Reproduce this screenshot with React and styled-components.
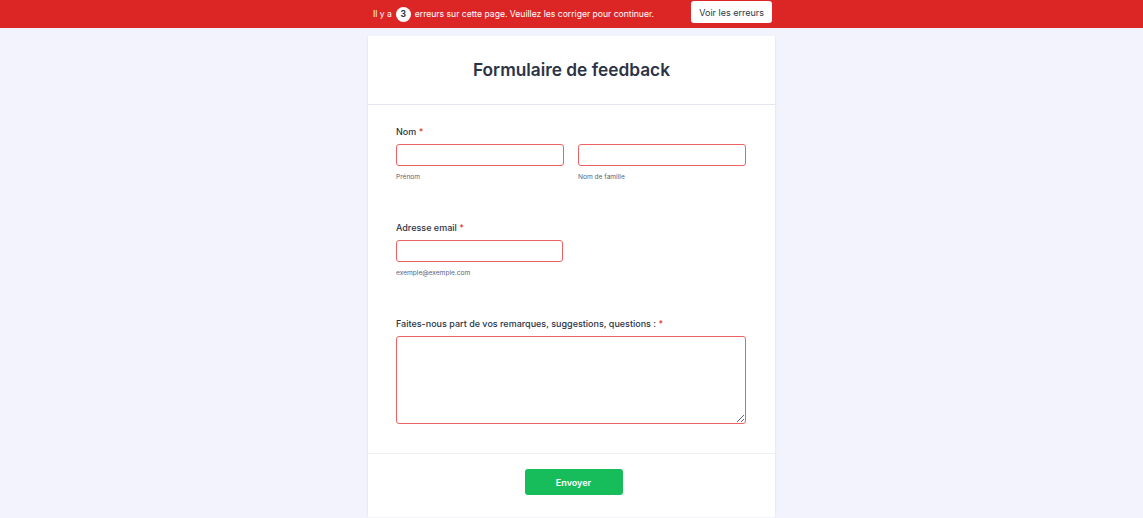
import styled, { createGlobalStyle } from "styled-components";

const GlobalStyle = createGlobalStyle`
  html, body {
    margin: 0;
    padding: 0;
    background: #f3f3fe;
    font-family: Inter, "Noto Sans", sans-serif;
    color: #2c3345;
  }
  * {
    box-sizing: border-box;
  }
`;

const Banner = styled.div`
  height: 28px;
  background: #dc2626;
  display: flex;
  align-items: center;
  justify-content: center;
  gap: 37px;
  padding-left: 2px;
`;

const BannerText = styled.p`
  margin: 0;
  color: #fff;
  font-size: 8.6px;
  display: flex;
  align-items: center;
  gap: 4px;
`;

const Badge = styled.span`
  display: inline-flex;
  align-items: center;
  justify-content: center;
  width: 15px;
  height: 15px;
  border-radius: 50%;
  background: #fff;
  color: #2c3345;
  font-size: 8.5px;
  font-weight: 700;
`;

const BannerButton = styled.button`
  width: 81px;
  height: 22px;
  margin-top: -4px;
  padding: 0;
  border: none;
  border-radius: 3px;
  background: #fff;
  color: #2c3345;
  font-family: inherit;
  font-size: 9px;
  cursor: pointer;
`;

const Card = styled.form`
  width: 407px;
  margin: 8px auto 0;
  background: #fff;
  box-shadow: 0 1px 2px rgba(40, 50, 80, 0.14);
`;

const Header = styled.header`
  height: 69px;
  display: flex;
  align-items: center;
  justify-content: center;
  padding-bottom: 1px;
  border-bottom: 1px solid #e3e5ef;
`;

const Title = styled.h1`
  margin: 0;
  font-size: 17.3px;
  font-weight: 600;
  color: #2c3345;
`;

const Body = styled.div`
  padding: 21px 29px 29px 28px;
  display: flex;
  flex-direction: column;
  gap: 41px;
  border-bottom: 1px solid #eef0f5;
`;

const Field = styled.div`
  display: flex;
  flex-direction: column;
`;

const Label = styled.label`
  font-size: 9px;
  font-weight: 500;
  line-height: 11px;
  margin-bottom: 7px;
  color: #2c3345;
`;

const Star = styled.span`
  color: #e53935;
`;

const Row = styled.div`
  display: grid;
  grid-template-columns: ${(p) => p.$cols || "1fr 1fr"};
  column-gap: 14px;
`;

const Cell = styled.div`
  display: flex;
  flex-direction: column;
`;

const Input = styled.input`
  height: 22px;
  width: 100%;
  border: 1px solid #ee6262;
  border-radius: 3px;
  outline: none;
  background: #fff;
`;

const TextArea = styled.textarea`
  height: 88px;
  width: 100%;
  border: 1px solid #ee6262;
  border-radius: 3px;
  outline: none;
  resize: vertical;
  font-family: inherit;
`;

const Sub = styled.span`
  margin-top: 7px;
  font-size: 6.6px;
  line-height: 8px;
  color: #57647e;
`;

const Footer = styled.div`
  display: flex;
  justify-content: center;
  padding: 15px 0 22px 4px;
`;

const Submit = styled.button`
  width: 98px;
  height: 26px;
  border: none;
  border-radius: 3px;
  background: #18bd5b;
  color: #fff;
  font-family: inherit;
  font-size: 9px;
  font-weight: 600;
  cursor: pointer;
`;

export default function App() {
  return (
    <>
      <GlobalStyle />
      <Banner>
        <BannerText>
          Il y a <Badge>3</Badge> erreurs sur cette page. Veuillez les corriger pour continuer.
        </BannerText>
        <BannerButton type="button">Voir les erreurs</BannerButton>
      </Banner>
      <Card onSubmit={(e) => e.preventDefault()}>
        <Header>
          <Title>Formulaire de feedback</Title>
        </Header>
        <Body>
          <Field>
            <Label>
              Nom <Star>*</Star>
            </Label>
            <Row>
              <Cell>
                <Input />
                <Sub>Prénom</Sub>
              </Cell>
              <Cell>
                <Input />
                <Sub>Nom de famille</Sub>
              </Cell>
            </Row>
          </Field>
          <Field>
            <Label>
              Adresse email <Star>*</Star>
            </Label>
            <Row $cols="167px 1fr">
              <Cell>
                <Input type="email" />
                <Sub>exemple@exemple.com</Sub>
              </Cell>
            </Row>
          </Field>
          <Field>
            <Label>
              Faites-nous part de vos remarques, suggestions, questions : <Star>*</Star>
            </Label>
            <TextArea />
          </Field>
        </Body>
        <Footer>
          <Submit type="submit">Envoyer</Submit>
        </Footer>
      </Card>
    </>
  );
}
